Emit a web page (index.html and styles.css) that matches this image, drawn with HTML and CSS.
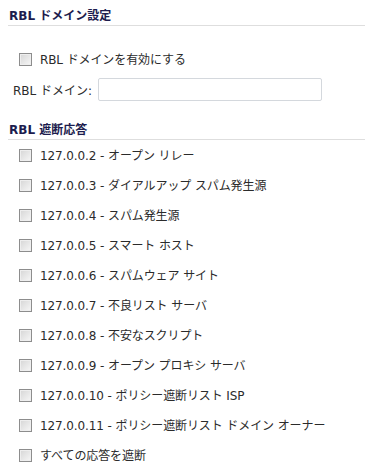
FILE: index.html
```html
<!DOCTYPE html>
<html>
<head>
    <title>RBL</title>
    <meta charset="UTF-8">
    <meta name="viewport" content="width=device-width, initial-scale=1.0">
    <link rel="stylesheet" href="styles.css">
</head>
<body>
<div class="section">
    <h2 class="heading">RBL ドメイン設定</h2>
    <div class="body first">
        <label class="row">
            <input type="checkbox">
            <span>RBL ドメインを有効にする</span>
        </label>
        <div class="field">
            <span class="field-label">RBL ドメイン:</span>
            <input type="text" class="text">
        </div>
    </div>
</div>
<div class="section">
    <h2 class="heading">RBL 遮断応答</h2>
    <div class="body">
        <label class="row"><input type="checkbox"><span>127.0.0.2 - オープン リレー</span></label>
        <label class="row"><input type="checkbox"><span>127.0.0.3 - ダイアルアップ スパム発生源</span></label>
        <label class="row"><input type="checkbox"><span>127.0.0.4 - スパム発生源</span></label>
        <label class="row"><input type="checkbox"><span>127.0.0.5 - スマート ホスト</span></label>
        <label class="row"><input type="checkbox"><span>127.0.0.6 - スパムウェア サイト</span></label>
        <label class="row"><input type="checkbox"><span>127.0.0.7 - 不良リスト サーバ</span></label>
        <label class="row"><input type="checkbox"><span>127.0.0.8 - 不安なスクリプト</span></label>
        <label class="row"><input type="checkbox"><span>127.0.0.9 - オープン プロキシ サーバ</span></label>
        <label class="row"><input type="checkbox"><span>127.0.0.10 - ポリシー遮断リスト ISP</span></label>
        <label class="row"><input type="checkbox"><span>127.0.0.11 - ポリシー遮断リスト ドメイン オーナー</span></label>
        <label class="row"><input type="checkbox"><span>すべての応答を遮断</span></label>
    </div>
</div>
</body>
</html>
```

FILE: styles.css
```css
body {
    margin: 0;
    padding: 8px 0 0 8px;
    background: #fff;
    font-family: "DejaVu Sans", "Noto Sans CJK JP", sans-serif;
    font-size: 12px;
    color: #2b2b2b;
}

.heading {
    margin: 0;
    padding: 0 0 1px 1px;
    font-size: 12px;
    line-height: 16px;
    font-weight: bold;
    color: #1c1c4e;
    border-bottom: 1px solid #dedede;
}

.body {
    padding-left: 11px;
}
.body.first {
    padding-top: 18px;
    padding-bottom: 21px;
}

.row {
    display: flex;
    align-items: center;
    height: 30px;
}
.row span {
    line-height: 16px;
    padding-top: 2px;
    letter-spacing: -0.1px;
}

input[type=checkbox] {
    appearance: none;
    -webkit-appearance: none;
    width: 13px;
    height: 13px;
    margin: 0 8px 0 0;
    border: 1px solid #8d8d8d;
    background: linear-gradient(135deg, #d6d6d6, #f7f7f7);
    box-shadow: inset 0 0 0 1px #eeeeee;
}

.field {
    display: flex;
    align-items: center;
    margin: 4px 0 0 -6px;
    height: 23px;
}
.field-label {
    width: 85px;
}
.text {
    width: 224px;
    height: 23px;
    box-sizing: border-box;
    margin: 0;
    border: 1px solid #d4d8dd;
    border-radius: 2px;
    padding: 2px 4px;
}
```
